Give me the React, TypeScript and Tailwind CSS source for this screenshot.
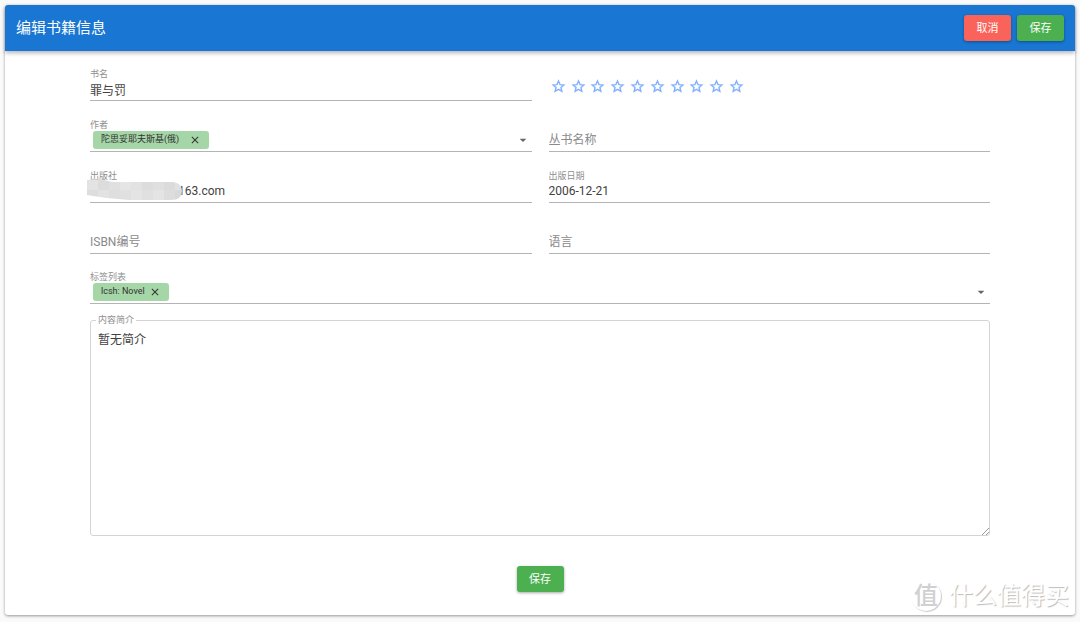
import { useId, useState, type ReactNode } from "react"
import clsx from "clsx"
import { MdArrowDropDown, MdClose } from "react-icons/md"

const LINE = "border-b border-[#b4b4b4]"
const LABEL = "block text-[9px] leading-3 text-[#8f8f8f]"
const VALUE = "block h-[18px] w-full min-w-0 bg-transparent text-xs outline-none"

function Button({ color, children }: { color: string; children: ReactNode }) {
  return (
    <button
      type="button"
      className={clsx(
        "h-[26px] min-w-[47px] rounded-[3px] px-3 pt-0.5 text-[11px] text-white shadow-[0_1px_3px_rgba(0,0,0,0.35)]",
        color,
      )}
    >
      {children}
    </button>
  )
}

function Row({ children }: { children: ReactNode }) {
  return <div className="grid h-[51px] grid-cols-2 items-end gap-[17px] first:h-[50px]">{children}</div>
}

/** Text field: the label floats above once there is a value. */
function Field({ label, initial = "" }: { label: string; initial?: string }) {
  const id = useId()
  const [value, setValue] = useState(initial)
  return (
    <div className={clsx("pb-0.5", LINE)}>
      {value && (
        <label htmlFor={id} className={LABEL}>
          {label}
        </label>
      )}
      <input
        id={id}
        aria-label={label}
        placeholder={label}
        value={value}
        onChange={(e) => setValue(e.target.value)}
        className={clsx(VALUE, "placeholder:text-[#8a8a8a]")}
      />
    </div>
  )
}

const MOSAIC = [
  ["#e3e3e3", "#dcdcdc", "#e0e0e0", "#e5e5e5", "#e2e2e2", "#dcdcdc", "#dfdfdf", "#dbdbdb", "#e1e1e1"],
  ["#dddddd", "#e2e2e2", "#dedede", "#e0e0e0", "#e4e4e4", "#e0e0e0", "#e4e4e4", "#dddddd", "#d9d9d9"],
]

function PublisherField() {
  const id = useId()
  return (
    <div className={clsx("relative pb-0.5", LINE)}>
      <label htmlFor={id} className={LABEL}>
        出版社
      </label>
      <input id={id} defaultValue="163.com" className={clsx(VALUE, "pl-[88px]")} />
      <svg viewBox="0 0 96 22" aria-hidden className="absolute bottom-px -left-[3px] h-[22px] w-24">
        <clipPath id="smudge">
          <path d="M0 1Q12 -1 26 3H86Q95 4 95 12Q95 21 84 21H42Q20 20 0 16Z" />
        </clipPath>
        <g clipPath="url(#smudge)">
          {MOSAIC.map((row, y) =>
            row.map((fill, x) => (
              <rect key={`${x}-${y}`} x={x * 11} y={y * 11} width="11" height="11" fill={fill} />
            )),
          )}
        </g>
      </svg>
    </div>
  )
}

function ChipField({ label, chip, gap }: { label: string; chip: string; gap: string }) {
  const [open, setOpen] = useState(false)
  return (
    <div role="group" aria-label={label} className={LINE}>
      <span className={LABEL}>{label}</span>
      <div className="flex items-center justify-between px-[3px] pb-0.5">
        <span
          className={clsx(
            "flex h-[18px] items-center rounded-[3px] bg-[#a5d6a7] px-2 text-[9px] text-[#333]",
            gap,
          )}
        >
          {chip}
          <button type="button" aria-label={`移除 ${chip}`}>
            <MdClose size={12} />
          </button>
        </span>
        <button
          type="button"
          aria-label={`展开${label}`}
          aria-expanded={open}
          onClick={() => setOpen(!open)}
          className="text-[#666]"
        >
          <MdArrowDropDown size={16} className="-mr-0.5" />
        </button>
      </div>
    </div>
  )
}

function Star() {
  return (
    <svg viewBox="0 0 24 24" aria-hidden className="size-[17px] fill-none stroke-current stroke-2">
      <path d="M12 4.2L14.2 9.3L19.6 9.8L15.5 13.4L16.7 18.8L12 16L7.3 18.8L8.5 13.4L4.4 9.8L9.8 9.3Z" />
    </svg>
  )
}

function Rating() {
  return (
    <div role="group" aria-label="评分" className="grid w-[198px] grid-cols-10 self-end pb-1.5">
      {Array.from({ length: 10 }, (_, i) => (
        <button key={i} type="button" aria-label={`${i + 1} 星`} className="flex justify-center text-[#82b1ff]">
          <Star />
        </button>
      ))}
    </div>
  )
}

function Watermark() {
  return (
    <div
      aria-hidden
      className="pointer-events-none absolute right-1.5 bottom-0.5 flex items-center gap-2 text-2xl leading-[34px] text-white [text-shadow:1px_1px_1px_#bbb]"
    >
      <span className="flex size-[30px] items-center justify-center rounded-full font-medium text-[#d0d0d0] shadow-[1px_1px_1px_#ccc] [text-shadow:none]">
        值
      </span>
      <span>什么值得买</span>
    </div>
  )
}

export default function App() {
  return (
    <div className="min-h-screen bg-[#fafafa] px-[5px] pt-[5px] pb-[7px] font-[Roboto,'Noto_Sans_CJK_SC',sans-serif] text-[#424242]">
      <form className="relative rounded-[3px] bg-white pb-[23px] shadow-[0_1px_3px_rgba(0,0,0,0.4)]">
        <header className="flex h-[46px] items-center gap-1.5 rounded-t-[3px] bg-[#1976d2] px-[11px] shadow-[0_2px_4px_rgba(0,0,0,0.3)]">
          <h1 className="flex-1 text-[15px] text-white">编辑书籍信息</h1>
          <Button color="bg-[#f9635a]">取消</Button>
          <Button color="bg-[#4caf50]">保存</Button>
        </header>

        <div className="px-[85px]">
          <Row>
            <Field label="书名" initial="罪与罚" />
            <Rating />
          </Row>
          <Row>
            <ChipField label="作者" chip="陀思妥耶夫斯基(俄)" gap="gap-2.5" />
            <Field label="丛书名称" />
          </Row>
          <Row>
            <PublisherField />
            <Field label="出版日期" initial="2006-12-21" />
          </Row>
          <Row>
            <Field label="ISBN编号" />
            <Field label="语言" />
          </Row>
          <div className="flex h-[50px] flex-col justify-end">
            <ChipField label="标签列表" chip="lcsh: Novel" gap="gap-1" />
          </div>

          <fieldset className="relative mt-2.5 rounded-[3px] border border-[#d4d4d4]">
            <legend className="ml-[5px] px-0.5">
              <label htmlFor="summary" className={LABEL}>
                内容简介
              </label>
            </legend>
            <textarea
              id="summary"
              defaultValue="暂无简介"
              className="block h-[209px] w-full resize-none bg-transparent px-[7px] pt-1 text-xs leading-5 outline-none"
            />
            <svg viewBox="0 0 8 8" aria-hidden className="absolute right-0 bottom-0 size-2 stroke-[#999]">
              <path d="M1 8L8 1M5 8L8 5" />
            </svg>
          </fieldset>
        </div>

        <div className="mt-[30px] flex justify-center">
          <Button color="bg-[#4caf50]">保存</Button>
        </div>
        <Watermark />
      </form>
    </div>
  )
}
